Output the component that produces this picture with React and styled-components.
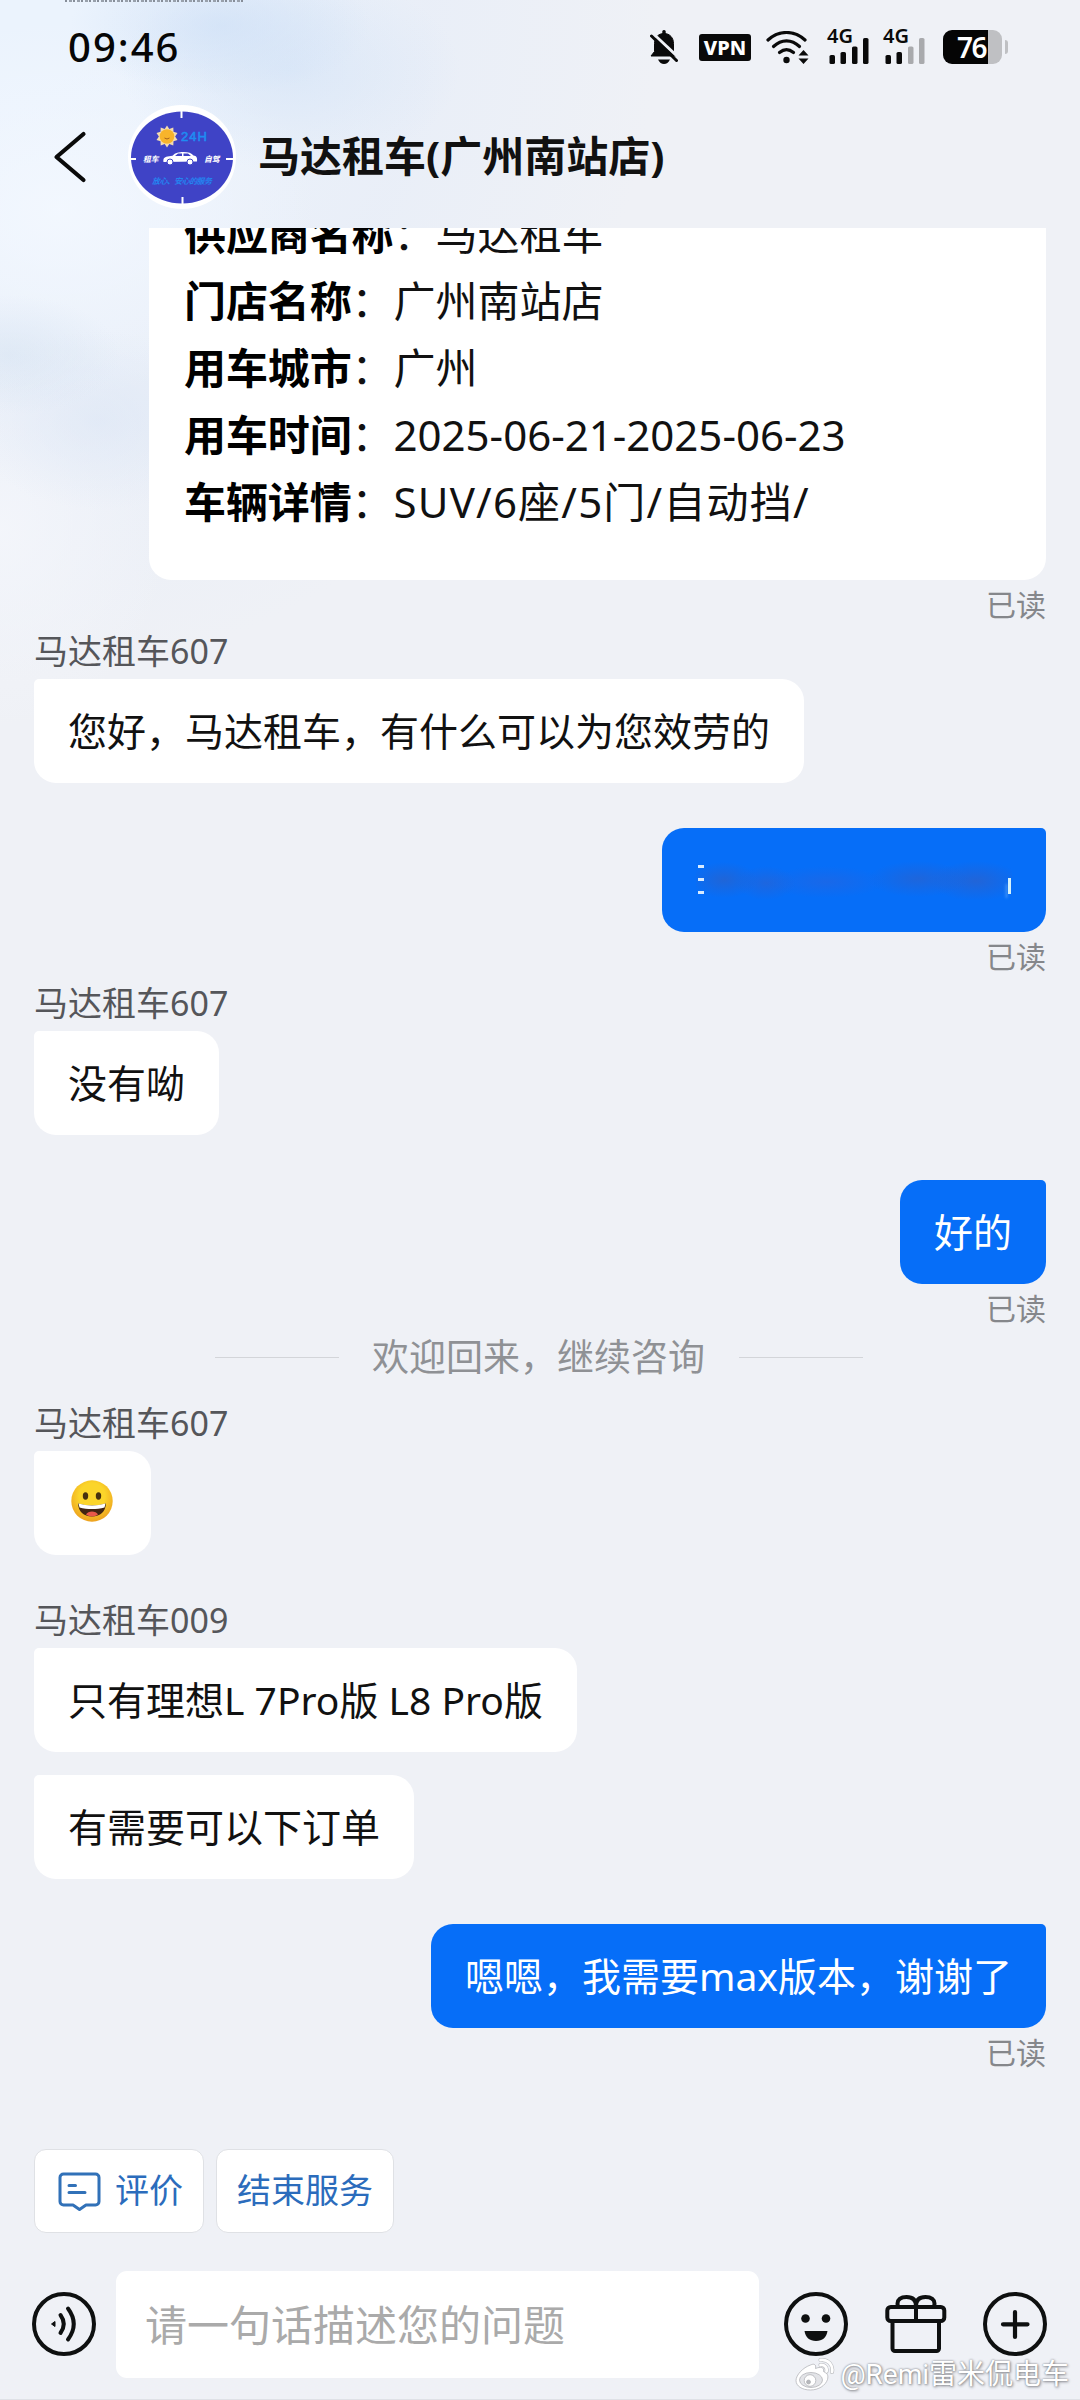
import React, { Fragment } from "react";
import styled, { createGlobalStyle } from "styled-components";

const MESSAGES = [
  { type: 'card' },
  { type: 'read' },
  { type: 'name', text: '马达租车607' },
  { type: 'left', text: '您好，马达租车，有什么可以为您效劳的' },
  { type: 'masked', gap: 45 },
  { type: 'read' },
  { type: 'name', text: '马达租车607' },
  { type: 'left', text: '没有呦' },
  { type: 'right', text: '好的', gap: 45 },
  { type: 'read' },
  { type: 'divider', text: '欢迎回来，继续咨询' },
  { type: 'name', text: '马达租车607', gap: 0 },
  { type: 'emoji' },
  { type: 'name', text: '马达租车009', gap: 45 },
  { type: 'left', text: '只有理想L 7Pro版 L8 Pro版' },
  { type: 'left', text: '有需要可以下订单', gap: 23 },
  { type: 'right', text: '嗯嗯，我需要max版本，谢谢了', gap: 45 },
  { type: 'read' },
]

const DETAILS = [
  ['供应商名称', '马达租车'],
  ['门店名称', '广州南站店'],
  ['用车城市', '广州'],
  ['用车时间', '2025-06-21-2025-06-23'],
  ['车辆详情', 'SUV/6座/5门/自动挡/', 1.2],
]

const BellOff = () => (
  <svg width="28" height="36" viewBox="0 0 28 36">
    <path d="M14 1v3M14 3.500c-6 0-9.500 4.500-9.500 10v8L1 26h26l-3.500-4.500v-8c0-5.500-3.500-10-9.500-10z" fill="#0a0a0a" stroke="#0a0a0a" strokeWidth="1" />
    <rect x="12.300" y="0" width="3.400" height="5" rx="1.500" fill="#0a0a0a" />
    <path d="M8 29.500h12c-1.500 3-3.500 4.500-6 4.500s-4.500-1.500-6-4.500z" fill="#0a0a0a" />
    <path d="M3 3.500L29 28" stroke="#eff1f6" strokeWidth="3" />
    <path d="M1.500 6L26.500 30.500" stroke="#0a0a0a" strokeWidth="3" strokeLinecap="round" />
  </svg>
)

const Wifi = () => (
  <svg width="43" height="34" viewBox="0 0 43 34">
    <g fill="none" stroke="#0a0a0a" strokeWidth="3.200" strokeLinecap="round">
      <path d="M2 9C13-1 28-1 39 9" />
      <path d="M7.500 15.500C15.500 8 25.500 8 33.500 15.500" />
      <path d="M13.500 21.500C18 17.700 23 17.700 27.500 21.500" />
    </g>
    <circle cx="20.500" cy="29" r="3.200" fill="#0a0a0a" />
    <path d="M37.500 19l5 5.500h-10zM37.500 33l5-5.500h-10z" fill="#0a0a0a" />
  </svg>
)

const Signal = ({ level }) => (
  <svg width="42" height="26" viewBox="0 0 42 26">
    {[[3, 17], [14, 14], [25.5, 8.5], [36.5, 0]].map(([x, y], i) => (
      <rect key={x} x={x - 0.5} y={y} width="5.500" height={26 - y} rx="1.600" fill={i < level ? '#0a0a0a' : '#a9aaad'} />
    ))}
  </svg>
)

const BackArrow = () => (
  <svg width="34" height="52" viewBox="0 0 34 52">
    <path d="M30.500 3L3.500 26L30.500 49" fill="none" stroke="#0a0a0a" strokeWidth="4.200" strokeLinecap="round" strokeLinejoin="round" />
  </svg>
)

const Avatar = () => (
  <svg width="108" height="104" viewBox="0 0 108 104">
    <ellipse cx="54" cy="52" rx="54" ry="52" fill="#fff" />
    <ellipse cx="54" cy="52.500" rx="51" ry="46" fill="#3f43c6" />
    <path d="M53.500 6v7M54.500 92v7M3 54h5M98 54h7" stroke="#fff" strokeWidth="2" />
    <path d="M39 20.500l2.300 3.500 4-1.500.2 4.200 4 1.300-2.400 3.500 2.400 3.500-4 1.300-.2 4.200-4-1.500-2.300 3.500-2.300-3.500-4 1.500-.2-4.200-4-1.300 2.400-3.500-2.400-3.500 4-1.300.2-4.200 4 1.500z" fill="#f4dcae" />
    <circle cx="39" cy="31.500" r="7.300" fill="#f8b42b" />
    <path d="M36.500 33q2.500 2 5 0" stroke="#a8621a" fill="none" strokeWidth="1" />
    <text x="53" y="36" fontSize="13" fill="#1e8cf2" stroke="#1e8cf2" strokeWidth=".6" fontFamily="Liberation Sans, sans-serif" textLength="26">24H</text>
    <g fontFamily="Noto Sans CJK SC, sans-serif" fontStyle="italic">
      <text x="15" y="57" fontSize="7.800" fill="#fff" fontWeight="700">租车</text>
      <text x="76" y="57" fontSize="7.800" fill="#fff" fontWeight="700">自驾</text>
      <text x="24" y="79" fontSize="8" fill="#2484f0" fontWeight="700" textLength="60">放心、安心的服务</text>
    </g>
    <path d="M35.500 57c-.5-3 .5-5 4-5.500l5-.8c3-3 6-3.700 11-3.700 5 0 8 1 10 3.500 3 .5 4 2 3.500 6z" fill="#fff" />
    <path d="M47 51l3-2.500h4V51zM55.500 48.500h4.500l3 2.500h-7.500z" fill="#3f43c6" />
    <circle cx="42" cy="57" r="3" fill="#fff" stroke="#3f43c6" />
    <circle cx="62" cy="57" r="3" fill="#fff" stroke="#3f43c6" />
  </svg>
)

const Grin = () => (
  <svg width="49" height="44" viewBox="0 0 49 44">
    <defs>
      <radialGradient id="grin" cx="50%" cy="38%" r="62%">
        <stop offset="0.500" stopColor="#fbd52a" />
        <stop offset="1" stopColor="#eda11f" />
      </radialGradient>
    </defs>
    <circle cx="24" cy="22" r="20.700" fill="url(#grin)" />
    <ellipse cx="17.500" cy="17" rx="2.700" ry="3.700" fill="#46310f" />
    <ellipse cx="30.500" cy="17" rx="2.700" ry="3.700" fill="#46310f" />
    <path d="M10 24.500c9 2.500 19 2.500 28 0-.5 8-5.500 13-14 13s-13.500-5-14-13z" fill="#412512" />
    <path d="M10.500 24.500c9 2.500 18 2.500 27 0l-1 4c-8 2-17 2-25 0z" fill="#fff" />
    <path d="M18 35.500c2-4 10-4 12 0-3.500 2.500-8.500 2.500-12 0z" fill="#e8594a" />
  </svg>
)

const CommentIcon = () => (
  <svg width="43" height="39" viewBox="0 0 43 39">
    <g fill="none" stroke="#3171b8" strokeWidth="3" strokeLinecap="round" strokeLinejoin="round">
      <path d="M5.500 2h32a3.500 3.500 0 0 1 3.500 3.500v24a3.500 3.500 0 0 1-3.500 3.500H28l-6.500 4.500L15 33H5.500A3.500 3.500 0 0 1 2 29.500v-24A3.500 3.500 0 0 1 5.500 2z" />
      <path d="M11 13.500h6.500M11 20.500h16" />
    </g>
  </svg>
)

const Round = ({ children }) => (
  <svg width="64" height="64" viewBox="0 0 64 64">
    <circle cx="32" cy="32" r="30" fill="none" stroke="#0e1010" strokeWidth="4" />
    {children}
  </svg>
)

const VoiceIcon = () => (
  <Round>
    <path d="M23 29.500v5l-3.500-2.500z" fill="#0e1010" stroke="#0e1010" strokeLinejoin="round" />
    <path d="M28.500 23q6.500 9 0 18M36 16.500q11.500 15.500 0 31" fill="none" stroke="#0e1010" strokeWidth="4" strokeLinecap="round" />
  </Round>
)

const SmileIcon = () => (
  <Round>
    <circle cx="21.500" cy="26.500" r="4.300" fill="#0e1010" />
    <circle cx="42" cy="26.500" r="4.300" fill="#0e1010" />
    <path d="M20.500 39h23c-1 6.500-5 10-11.500 10s-10.500-3.500-11.500-10z" fill="#0e1010" />
  </Round>
)

const PlusIcon = () => (
  <Round>
    <path d="M32 20v25M20 32.300h24.500" stroke="#0e1010" strokeWidth="4.200" strokeLinecap="round" />
  </Round>
)

const GiftIcon = () => (
  <svg width="62" height="60" viewBox="0 0 62 60">
    <g fill="none" stroke="#0e1010" strokeWidth="4" strokeLinejoin="round">
      <rect x="2.300" y="13" width="57" height="14" rx="3.500" />
      <path d="M7.500 27v27.500a2.500 2.500 0 0 0 2.500 2.500h41.500a2.500 2.500 0 0 0 2.500-2.500V27" />
      <path d="M31 27V12M31 12c0-6-3.500-9-9.500-9-6 0-9 3-9 6.500 0 1.500.3 2.500.6 3.500M31 12c0-6 3.500-9 9.500-9 6 0 9 3 9 6.500 0 1.500-.3 2.500-.6 3.500" />
    </g>
  </svg>
)

const WeiboLogo = () => (
  <svg width="40" height="34" viewBox="0 0 40 34">
    <g stroke="#aaacb0" strokeWidth=".7">
      <path d="M15.500 7c3-1.500 6-1 5 3.500 5-2 9-1.500 8 3 4 1.500 5 4 4 8-2 6-9 10.500-17 10.500C7 32 1 28 1 22.500 1 17 8 9.500 15.500 7z" fill="#fff" />
      <ellipse cx="16" cy="22" rx="11.500" ry="7.500" fill="#e3e4e8" />
      <circle cx="15" cy="22.500" r="5.800" fill="#fff" />
      <circle cx="13.500" cy="24" r="2" fill="#b5b7bb" />
    </g>
    <path d="M25.500 7c4-.5 7 2.500 6 6.500M25.500 2c7.500-1 13 5 11.500 12" fill="none" stroke="#b8babe" strokeWidth="4" strokeLinecap="round" />
    <path d="M25.500 7c4-.5 7 2.500 6 6.500M25.500 2c7.500-1 13 5 11.500 12" fill="none" stroke="#fff" strokeWidth="2.800" strokeLinecap="round" />
  </svg>
)

function Message({ item }) {
  switch (item.type) {
    case 'card':
      return (
        <OrderCard>
          {DETAILS.map(([label, value, spacing]) => (
            <OrderRow key={label} $spacing={spacing}><b>{label}</b>：<span>{value}</span></OrderRow>
          ))}
        </OrderCard>
      )
    case 'read':
      return <ReadMark>已读</ReadMark>
    case 'name':
      return <Sender $gap={item.gap}>{item.text}</Sender>
    case 'divider':
      return <Divider><span>{item.text}</span></Divider>
    case 'emoji':
      return <Bubble><Grin /></Bubble>
    case 'masked':
      return <Bubble $mine $gap={item.gap}><Smudge><i /><em /></Smudge></Bubble>
    default:
      return <Bubble $mine={item.type === 'right'} $gap={item.gap}>{item.text}</Bubble>
  }
}

export default function App() {
  return (
    <Fragment>
      <GlobalStyle />
      <Screen>
        <TopSpeck />
        <StatusBar>
          <Clock>09:46</Clock>
          <StatusIcons>
            <BellOff />
            <Vpn>VPN</Vpn>
            <Wifi />
            <Network><small>4G</small><Signal level={4} /></Network>
            <Network><small>4G</small><Signal level={2} /></Network>
            <Battery>76</Battery>
          </StatusIcons>
        </StatusBar>
        <Header>
          <BackArrow />
          <Avatar />
          <Title>马达租车(广州南站店)</Title>
        </Header>
        <Chat>
          {MESSAGES.map((item, i) => <Message key={i} item={item} />)}
        </Chat>
        <Actions>
          <ActionButton><CommentIcon />评价</ActionButton>
          <ActionButton>结束服务</ActionButton>
        </Actions>
        <InputBar>
          <VoiceIcon />
          <Field placeholder="请一句话描述您的问题" />
          <Tools>
            <SmileIcon />
            <GiftIcon />
            <PlusIcon />
          </Tools>
        </InputBar>
        <Watermark><WeiboLogo /><span>@Remi雷米侃电车</span></Watermark>
      </Screen>
    </Fragment>
  )
}

const GlobalStyle = createGlobalStyle`
  body {
    margin: 0;
    background: #eff1f6;
  }
  * {
    box-sizing: border-box;
  }
  svg {
    display: block;
    flex-shrink: 0;
  }
`

const Screen = styled.div`
  position: relative;
  display: flex;
  flex-direction: column;
  width: 1080px;
  height: 2400px;
  overflow: hidden;
  font-family: 'Noto Sans', 'Noto Sans CJK SC', sans-serif;
  color: #111;
  border-bottom: 1px solid #dfe1e6;
  background:
    radial-gradient(ellipse 150px 70px at 220px 25px, rgba(203, 222, 246, .6), transparent),
    radial-gradient(ellipse 170px 100px at 290px 70px, rgba(208, 225, 246, .55), transparent),
    radial-gradient(ellipse 110px 60px at 10px 355px, rgba(214, 227, 242, .6), transparent),
    radial-gradient(ellipse 130px 90px at 100px 420px, rgba(220, 230, 245, .6), transparent),
    radial-gradient(ellipse 260px 190px at 60px 210px, rgba(243, 248, 255, .9), transparent),
    radial-gradient(ellipse 170px 200px at 0 530px, rgba(244, 246, 251, .9), transparent),
    radial-gradient(ellipse 660px 680px at 0 0, #ebf3fd 15%, rgba(232, 238, 248, .8) 65%, transparent),
    #eff1f6;
`

const TopSpeck = styled.div`
  height: 2px;
  width: 179px;
  margin-left: 65px;
  background: repeating-linear-gradient(90deg, #868d98 0 2px, transparent 2px 4px, #98a0ab 4px 7px, transparent 7px 8px);
`

const StatusBar = styled.div`
  display: flex;
  justify-content: space-between;
  height: 92px;
  padding: 0 78px 0 68px;
`

const Clock = styled.div`
  height: 92px;
  line-height: 90px;
  font-size: 40px;
  font-weight: 500;
  letter-spacing: 2px;
  color: #060606;
`

const StatusIcons = styled.div`
  display: flex;
  align-items: flex-start;
  padding-top: 28px;

  & > svg:nth-child(3) {
    margin: 1px 18px 0 15px;
  }
`

const Vpn = styled.div`
  width: 52px;
  height: 27px;
  margin: 4px 0 0 21px;
  border-radius: 3px;
  background: #0a0a0a;
  color: #fff;
  font: 800 20px/27px 'Noto Sans', sans-serif;
  text-align: center;
`

const Network = styled.div`
  position: relative;
  width: 42px;
  margin-right: 14px;
  padding-top: 8px;

  small {
    position: absolute;
    top: -6px;
    left: 0;
    font: 600 20px/24px 'Noto Sans', sans-serif;
    color: #0a0a0a;
  }
`

const Battery = styled.div`
  position: relative;
  width: 59px;
  height: 34px;
  margin: 0 0 0 4px;
  padding-left: 14px;
  border-radius: 9px;
  background: linear-gradient(90deg, #050505 45px, #bfc0c3 45px);
  color: #fff;
  font-size: 28px;
  font-weight: 600;
  line-height: 35px;
  letter-spacing: -1.6px;

  &::after {
    content: '';
    position: absolute;
    right: -6px;
    top: 10px;
    width: 3px;
    height: 14px;
    border-radius: 0 3px 3px 0;
    background: #bfc0c3;
  }
`

const Header = styled.header`
  display: flex;
  align-items: center;
  height: 134px;
  padding: 0 0 8px 53px;

  svg + svg {
    margin: 0 22px 0 41px;
  }
`

const Title = styled.h1`
  margin: 0 0 3px;
  font-size: 42px;
  font-weight: 700;
  line-height: 60px;
`

/* newest message sits at the bottom, older ones run under the header */
const Chat = styled.main`
  display: flex;
  flex-direction: column;
  justify-content: flex-end;
  align-items: flex-start;
  height: 1872px;
  padding: 0 34px 21px;
  overflow: hidden;
  flex-shrink: 0;

  & > * {
    flex-shrink: 0;
  }
`

const OrderCard = styled.div`
  align-self: flex-end;
  width: 897px;
  padding: 36px 35px 45px;
  border-radius: 22px;
  background: #fff;
`

const OrderRow = styled.div`
  height: 67px;
  font-size: 42px;
  line-height: 67px;
  letter-spacing: -.1px;
  white-space: nowrap;

  b {
    color: #000;
  }
  span {
    letter-spacing: ${({ $spacing }) => $spacing || 0}px;
  }
`

const ReadMark = styled.div`
  align-self: flex-end;
  height: 33px;
  margin: 8px 0 10px;
  font-size: 30px;
  line-height: 33px;
  color: #85878b;
`

const Sender = styled.div`
  height: 40px;
  margin: ${({ $gap }) => $gap || 0}px 0 8px;
  font-size: 34px;
  line-height: 40px;
  color: #55565a;
`

const Bubble = styled.div`
  display: flex;
  align-items: center;
  align-self: ${({ $mine }) => ($mine ? 'flex-end' : 'flex-start')};
  height: 104px;
  margin-top: ${({ $gap }) => $gap || 0}px;
  padding: 0 34px 5px;
  border-radius: ${({ $mine }) => ($mine ? '22px 5px 22px 22px' : '5px 22px 22px 22px')};
  background: ${({ $mine }) => ($mine ? '#066ef8' : '#fff')};
  color: ${({ $mine }) => ($mine ? '#fff' : '#111')};
  font-size: 39px;
  white-space: nowrap;
`

const Smudge = styled.div`
  display: flex;
  justify-content: space-between;
  align-items: center;
  width: 316px;
  height: 40px;
  margin-top: 4px;
  background:
    radial-gradient(ellipse 34px 18px at 28px 20px, rgba(40, 98, 205, .75), transparent),
    radial-gradient(ellipse 30px 17px at 70px 23px, rgba(42, 98, 210, .65), transparent),
    radial-gradient(ellipse 60px 16px at 130px 22px, rgba(38, 100, 222, .6), transparent),
    radial-gradient(ellipse 50px 18px at 222px 19px, rgba(40, 98, 208, .7), transparent),
    radial-gradient(ellipse 46px 20px at 280px 21px, rgba(40, 98, 208, .8), transparent);

  i {
    width: 6px;
    height: 29px;
    margin-left: 2px;
    background: repeating-linear-gradient(#d8ebff 0 3px, transparent 3px 13px);
    filter: blur(.7px);
  }
  em {
    width: 3px;
    height: 16px;
    margin: 12px 1px 0 0;
    background: #d5f2fb;
    box-shadow: -3px 5px 3px -1px #7fbcf9;
  }
`

const Divider = styled.div`
  display: flex;
  align-items: center;
  justify-content: center;
  align-self: stretch;
  gap: 34px;
  height: 52px;
  margin: -6px -32px 22px -34px;
  font-size: 37px;
  color: #8f9195;

  &::before,
  &::after {
    content: '';
    width: 124px;
    height: 1px;
    margin-top: 4px;
    background: #d3d5d9;
  }
  span {
    margin-left: -1px;
  }
`

const Actions = styled.div`
  display: flex;
  gap: 12px;
  height: 171px;
  padding: 49px 34px 0;
`

const ActionButton = styled.button`
  display: flex;
  align-items: center;
  gap: 14px;
  height: 84px;
  padding: 0 20px 6px 23px;
  border: 1.500px solid #dfe1e5;
  border-radius: 12px;
  background: #fff;
  color: #2b6cbc;
  font-family: inherit;
  font-size: 34px;

  svg {
    margin-top: 6px;
  }
  & + & {
    padding-left: 20px;
  }
`

const InputBar = styled.div`
  display: flex;
  align-items: center;
  height: 107px;
  padding: 0 33px 0 32px;

  svg {
    margin-bottom: 2px;
  }
`

const Field = styled.input`
  width: 643px;
  height: 107px;
  margin-left: 20px;
  padding: 0 29px 1px;
  border: none;
  border-radius: 11px;
  outline: none;
  background: #fff;
  font-family: inherit;
  font-size: 42px;

  &::placeholder {
    color: #aaa;
    opacity: 1;
  }
`

const Tools = styled.div`
  flex: 1;
  display: flex;
  align-items: center;
  justify-content: space-between;
  padding-left: 25px;
`

const Watermark = styled.div`
  position: absolute;
  right: 11px;
  bottom: 6px;
  display: flex;
  align-items: center;
  gap: 5px;
  height: 36px;
  color: #fff;
  font: 400 28px/36px Roboto, 'Noto Sans CJK SC', sans-serif;
  text-shadow: 0 0 2px #7a7c80, 1px 1px 3px #8a8c90;
  white-space: nowrap;
`
